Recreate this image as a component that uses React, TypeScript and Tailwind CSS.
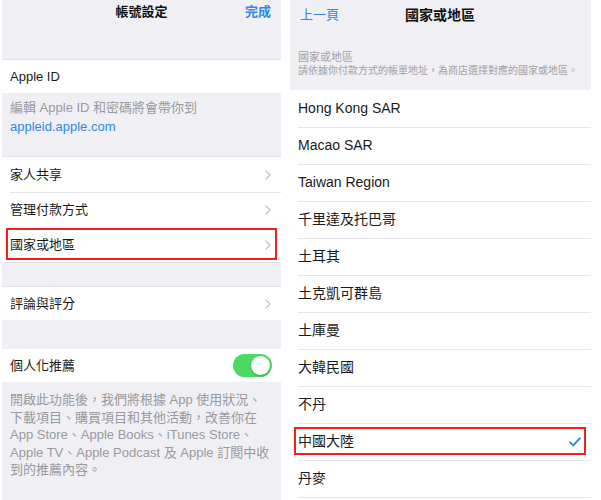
import React from "react";

const FONT = {
  fontFamily: '"Liberation Sans", "Noto Sans CJK TC", "Noto Sans CJK SC", sans-serif',
};

const REGIONS = [
  "Hong Kong SAR",
  "Macao SAR",
  "Taiwan Region",
  "千里達及托巴哥",
  "土耳其",
  "土克凱可群島",
  "土庫曼",
  "大韓民國",
  "不丹",
  "中國大陸",
  "丹麥",
];

// lines broken as on the device
const RECOMMEND_NOTE = [
  "開啟此功能後，我們將根據 App 使用狀況、",
  "下載項目、購買項目和其他活動，改善你在",
  "App Store、Apple Books、iTunes Store、",
  "Apple TV、Apple Podcast 及 Apple 訂閱中收",
  "到的推薦內容。",
];

function Chevron() {
  return (
    <svg width="6" height="10" viewBox="0 0 6 10" className="shrink-0">
      <polyline
        points="1,1 5,5 1,9"
        fill="none"
        stroke="#c4c4c9"
        strokeWidth="1.3"
        strokeLinecap="round"
        strokeLinejoin="round"
      />
    </svg>
  );
}

function Toggle() {
  return (
    <div className="w-[39px] h-[23px] rounded-full bg-[#4cd964] flex items-center justify-end pr-[2px]">
      <div className="w-[19px] h-[19px] rounded-full bg-white shadow-[0_1px_2px_rgba(0,0,0,0.25)]" />
    </div>
  );
}

function NavRow({
  label,
  h,
  inset,
  boxed,
}: {
  label: string;
  h: string;
  inset?: boolean;
  boxed?: boolean;
}) {
  return (
    <div className={`relative flex items-center justify-between pl-2 pr-[10px] bg-white ${h}`}>
      {inset && <div className="absolute top-0 left-2 right-0 h-px bg-[#e6e6ea]" />}
      <span className="text-[13px] text-[#1a1a1a]">{label}</span>
      <Chevron />
      {boxed && (
        <span className="absolute left-[4px] right-[4px] top-0 bottom-[2px] border-2 border-[#f01e1e]" />
      )}
    </div>
  );
}

function AccountPanel() {
  return (
    <div className="w-[279px] h-[500px] ml-[2px] bg-[#efeff4] flex flex-col">
      {/* nav bar */}
      <div className="h-[60px] shrink-0 border-b border-[#e2e2e6]">
        <div className="h-[24px] flex items-center justify-between px-[10px]">
          <span className="w-[26px]" />
          <span className="text-[13px] font-semibold text-[#111]">帳號設定</span>
          <span className="text-[13px] font-semibold text-[#2f88e8]">完成</span>
        </div>
      </div>

      <div className="h-[33px] shrink-0 bg-white flex items-center pl-2">
        <span className="text-[13px] text-[#1a1a1a]">Apple ID</span>
      </div>

      <div className="h-[64px] shrink-0 pt-[5px] pl-2 text-[13px] leading-[19px] border-b border-[#e2e2e6]">
        <div className="text-[#9a9aa0]">編輯 Apple ID 和密碼將會帶你到</div>
        <div className="text-[#2f88e8]">appleid.apple.com</div>
      </div>

      <div className="shrink-0 flex flex-col border-b border-[#e2e2e6]">
        <NavRow label="家人共享" h="h-[35px]" />
        <NavRow label="管理付款方式" h="h-[36px]" inset />
        <NavRow label="國家或地區" h="h-[34px]" inset boxed />
      </div>

      <div className="h-[24px] shrink-0 border-b border-[#e2e2e6]" />

      <NavRow label="評論與評分" h="h-[33px] shrink-0" />

      <div className="h-[29px] shrink-0" />

      <div className="h-[33px] shrink-0 bg-white flex items-center justify-between pl-2 pr-[9px]">
        <span className="text-[13px] text-[#1a1a1a]">個人化推薦</span>
        <Toggle />
      </div>

      <div className="pt-[9px] pl-2 text-[13px] leading-[17.6px] text-[#9a9aa0]">
        {RECOMMEND_NOTE.map((line) => (
          <div key={line} className="whitespace-nowrap">
            {line}
          </div>
        ))}
      </div>
    </div>
  );
}

function RegionPanel() {
  return (
    <div className="w-[301px] h-[500px] ml-[9px] bg-white flex flex-col overflow-hidden">
      <div className="h-[90px] shrink-0 bg-[#efeff4]">
        <div className="h-[30px] flex items-center px-[10px] relative">
          <span className="text-[13px] text-[#2f88e8]">上一頁</span>
          <span className="flex-1 text-center text-[14px] font-semibold text-[#111] pr-[40px]">
            國家或地區
          </span>
        </div>
        <div className="pt-[20px] pl-2">
          <div className="text-[11px] leading-[14px] text-[#a2a2a8]">國家或地區</div>
          <div className="text-[10px] leading-[14px] text-[#a2a2a8]">
            請依據你付款方式的帳單地址，為商店選擇對應的國家或地區。
          </div>
        </div>
      </div>

      {REGIONS.map((r, i) => (
        <div key={r} className="relative h-[37px] shrink-0 flex items-center justify-between pl-2 pr-[10px]">
          {i > 0 && <div className="absolute top-0 left-2 right-0 h-px bg-[#e6e6ea]" />}
          <span className="text-[14px] text-[#1a1a1a]">{r}</span>
          {r === "中國大陸" && (
            <>
              <svg width="12" height="10" viewBox="0 0 12 10">
                <polyline
                  points="1.2,5.4 4.3,8.4 10.8,1.4"
                  fill="none"
                  stroke="#2f88e8"
                  strokeWidth="2"
                  strokeLinecap="round"
                  strokeLinejoin="round"
                />
              </svg>
              <span className="absolute left-[4px] right-[5px] top-[4px] bottom-[5px] border-2 border-[#f01e1e]" />
            </>
          )}
        </div>
      ))}
      <div className="h-px shrink-0 ml-2 bg-[#e6e6ea]" />
    </div>
  );
}

export default function App() {
  return (
    <div className="w-[601px] h-[500px] bg-white flex overflow-hidden" style={FONT}>
      <AccountPanel />
      <RegionPanel />
    </div>
  );
}
